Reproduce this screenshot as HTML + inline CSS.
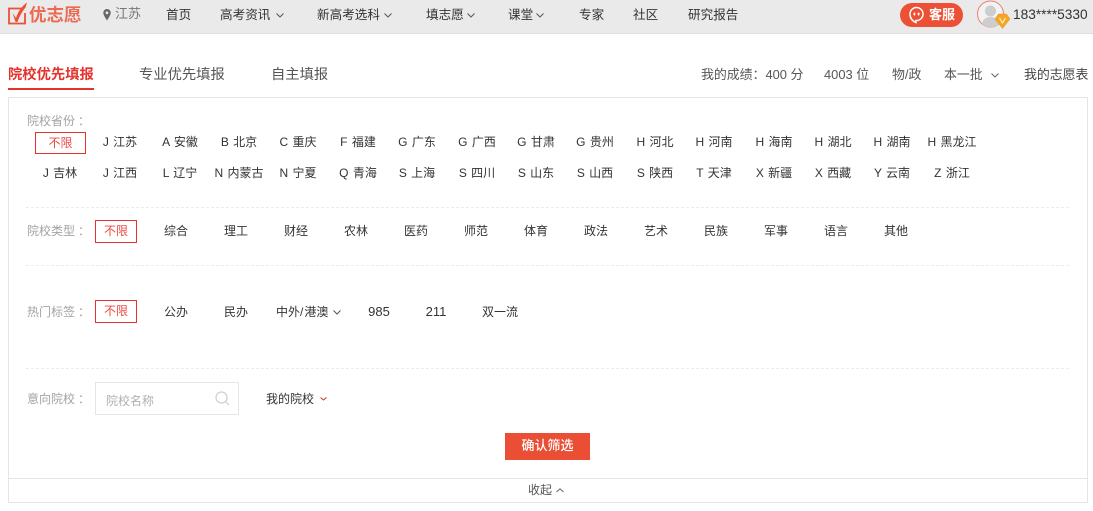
<!DOCTYPE html>
<html lang="zh">
<head>
<meta charset="utf-8">
<style>
html,body{margin:0;padding:0;width:1093px;height:511px;overflow:hidden;background:#fff}
body{position:relative;font-family:"Liberation Sans","Noto Sans CJK SC",sans-serif;font-size:12px;color:#333}
.a{position:absolute}
.c{position:absolute;width:70px;text-align:center;line-height:20px;height:20px;white-space:nowrap;word-spacing:1px}
.t{position:absolute;line-height:20px;height:20px;white-space:nowrap}
.g{color:#a3a3a3}
.n{color:#333;font-size:12.600px}
.r{color:#555;font-size:12.900px}
.k{position:relative;left:3px}
.box{position:absolute;border:1px solid #e5322d;box-sizing:border-box;color:#ea4a44;text-align:center}
.dash{position:absolute;left:26px;width:1043px;border-top:1px dashed #ececec;height:0}
svg{position:absolute;overflow:visible}
</style>
</head>
<body>
<div class="a" style="left:0;top:0;width:1093px;height:33px;background:#eaeaea;border-bottom:1px solid #dedede"></div>

<svg style="left:8px;top:2px" width="20" height="24" viewBox="0 0 20 24" fill="none">
<path d="M14 6.500H1V21.500H17V11" stroke="#ea5136" stroke-width="1.800"/>
<path d="M4.500 11L8 16C10 9.500 14 4 19 0.500L17.500 5.500C14.500 9 11.500 14 9.500 20H7.500Z" fill="#ea5136"/>
</svg>
<div class="t" style="left:29px;top:3px;font-size:17.500px;line-height:24px;height:24px;color:#ec6a52;font-weight:700">优志愿</div>

<svg style="left:103px;top:9px" width="8" height="12" viewBox="0 0 8 12"><path fill-rule="evenodd" d="M4 0a3.700 3.700 0 0 1 3.700 3.800C7.700 6.300 5 9.800 4 11.500 3 9.800.3 6.300.3 3.800A3.700 3.700 0 0 1 4 0Zm0 2.400a1.400 1.400 0 1 0 0 2.800 1.400 1.400 0 0 0 0-2.800Z" fill="#666"/></svg>
<div class="t" style="left:115px;top:4px;color:#777;font-size:13px">江苏</div>
<div class="t n" style="left:166px;top:5px">首页</div>
<div class="t n" style="left:220px;top:5px">高考资讯</div>
<svg style="left:276px;top:13px" width="8" height="5" fill="none"><path d="M.5.500 4 4 7.500.5" stroke="#555"/></svg>
<div class="t n" style="left:317px;top:5px">新高考选科</div>
<svg style="left:384px;top:13px" width="8" height="5" fill="none"><path d="M.5.500 4 4 7.500.5" stroke="#555"/></svg>
<div class="t n" style="left:426px;top:5px">填志愿</div>
<svg style="left:467px;top:13px" width="8" height="5" fill="none"><path d="M.5.500 4 4 7.500.5" stroke="#555"/></svg>
<div class="t n" style="left:508px;top:5px">课堂</div>
<svg style="left:536px;top:13px" width="8" height="5" fill="none"><path d="M.5.500 4 4 7.500.5" stroke="#555"/></svg>
<div class="t n" style="left:579px;top:5px">专家</div>
<div class="t n" style="left:633px;top:5px">社区</div>
<div class="t n" style="left:688px;top:5px">研究报告</div>

<div class="a" style="left:900px;top:3px;width:63px;height:24px;border-radius:12px;background:#ec5135"></div>
<svg style="left:908px;top:6px" width="17" height="18" viewBox="0 0 17 18" fill="none"><path d="M8.500 1.500a6.500 6.500 0 0 1 0 13H8v2C4.500 15 2 12 2 8A6.500 6.500 0 0 1 8.500 1.500Z" stroke="#fff" stroke-width="1.500"/><rect x="5.500" y="6.500" width="1.800" height="3" rx=".9" fill="#fff"/><rect x="9.700" y="6.500" width="1.800" height="3" rx=".9" fill="#fff"/></svg>
<div class="t" style="left:929px;top:5px;color:#fff;font-weight:700;font-size:13px">客服</div>

<svg style="left:977px;top:0" width="35" height="30" viewBox="0 0 35 30">
<circle cx="13.500" cy="14" r="13" fill="#f2f2f2" stroke="#e8806f"/>
<circle cx="13.500" cy="11" r="5.500" fill="#cdcdcd"/>
<path d="M5 24c1-5 4-7 8.500-7s7.500 2 8.500 7a13 13 0 0 1-17 0Z" fill="#cdcdcd"/>
<path d="M18 19l3.500-5h8l3.500 5-7.500 9.500Z" fill="#f6a623" stroke="#ee8a24" stroke-width=".5"/>
<path d="M22.500 18l3 5 3-5" fill="none" stroke="#fff3c4" stroke-width="1.200"/>
</svg>
<div class="t" style="left:1013px;top:5px;font-size:13.700px;color:#333">183****5330</div>

<div class="t" style="left:8px;top:65px;font-size:14.300px;font-weight:700;color:#e5322d;line-height:20px">院校优先填报</div>
<div class="a" style="left:8px;top:88px;width:86px;height:2px;background:#e5322d"></div>
<div class="t" style="left:139px;top:65px;font-size:14.300px;color:#555">专业优先填报</div>
<div class="t" style="left:271px;top:65px;font-size:14.300px;color:#555">自主填报</div>

<div class="t r" style="left:701px;top:65px">我的成绩：400 分</div>
<div class="t r" style="left:824px;top:65px">4003 位</div>
<div class="t r" style="left:892px;top:65px">物/政</div>
<div class="t r" style="left:944px;top:65px">本一批</div>
<svg style="left:991px;top:73px" width="8" height="5" fill="none"><path d="M.5.500 4 4 7.500.5" stroke="#666"/></svg>
<div class="t r" style="left:1024px;top:65px;color:#444">我的志愿表</div>

<div class="a" style="left:8px;top:97px;width:1080px;height:406px;box-sizing:border-box;border:1px solid #e5e5e5"></div>
<div class="a" style="left:9px;top:478px;width:1078px;height:1px;background:#e5e5e5"></div>

<div class="t g" style="left:27px;top:111px">院校省份<span class="k">：</span></div>
<div class="box" style="left:35px;top:132px;width:51px;height:22px;line-height:20px">不限</div>
<div class="c" style="left:85px;top:132px">J 江苏</div>
<div class="c" style="left:145px;top:132px">A 安徽</div>
<div class="c" style="left:204px;top:132px">B 北京</div>
<div class="c" style="left:263px;top:132px">C 重庆</div>
<div class="c" style="left:323px;top:132px">F 福建</div>
<div class="c" style="left:382px;top:132px">G 广东</div>
<div class="c" style="left:442px;top:132px">G 广西</div>
<div class="c" style="left:501px;top:132px">G 甘肃</div>
<div class="c" style="left:560px;top:132px">G 贵州</div>
<div class="c" style="left:620px;top:132px">H 河北</div>
<div class="c" style="left:679px;top:132px">H 河南</div>
<div class="c" style="left:739px;top:132px">H 海南</div>
<div class="c" style="left:798px;top:132px">H 湖北</div>
<div class="c" style="left:857px;top:132px">H 湖南</div>
<div class="c" style="left:917px;top:132px">H 黑龙江</div>

<div class="c" style="left:25px;top:163px">J 吉林</div>
<div class="c" style="left:85px;top:163px">J 江西</div>
<div class="c" style="left:145px;top:163px">L 辽宁</div>
<div class="c" style="left:204px;top:163px">N 内蒙古</div>
<div class="c" style="left:263px;top:163px">N 宁夏</div>
<div class="c" style="left:323px;top:163px">Q 青海</div>
<div class="c" style="left:382px;top:163px">S 上海</div>
<div class="c" style="left:442px;top:163px">S 四川</div>
<div class="c" style="left:501px;top:163px">S 山东</div>
<div class="c" style="left:560px;top:163px">S 山西</div>
<div class="c" style="left:620px;top:163px">S 陕西</div>
<div class="c" style="left:679px;top:163px">T 天津</div>
<div class="c" style="left:739px;top:163px">X 新疆</div>
<div class="c" style="left:798px;top:163px">X 西藏</div>
<div class="c" style="left:857px;top:163px">Y 云南</div>
<div class="c" style="left:917px;top:163px">Z 浙江</div>

<div class="dash" style="top:207px"></div>

<div class="t g" style="left:27px;top:221px">院校类型<span class="k">：</span></div>
<div class="box" style="left:95px;top:220px;width:42px;height:23px;line-height:21px">不限</div>
<div class="c" style="left:141px;top:221px">综合</div>
<div class="c" style="left:201px;top:221px">理工</div>
<div class="c" style="left:261px;top:221px">财经</div>
<div class="c" style="left:321px;top:221px">农林</div>
<div class="c" style="left:381px;top:221px">医药</div>
<div class="c" style="left:441px;top:221px">师范</div>
<div class="c" style="left:501px;top:221px">体育</div>
<div class="c" style="left:561px;top:221px">政法</div>
<div class="c" style="left:621px;top:221px">艺术</div>
<div class="c" style="left:681px;top:221px">民族</div>
<div class="c" style="left:741px;top:221px">军事</div>
<div class="c" style="left:801px;top:221px">语言</div>
<div class="c" style="left:861px;top:221px">其他</div>

<div class="dash" style="top:265px"></div>

<div class="t g" style="left:27px;top:302px">热门标签<span class="k">：</span></div>
<div class="box" style="left:95px;top:300px;width:42px;height:23px;line-height:21px">不限</div>
<div class="c" style="left:141px;top:302px">公办</div>
<div class="c" style="left:201px;top:302px">民办</div>
<div class="t" style="left:276px;top:302px">中外<span style="letter-spacing:1px">/</span>港澳</div>
<svg style="left:333px;top:310px" width="8" height="5" fill="none"><path d="M.5.500 4 4 7.500.5" stroke="#555"/></svg>
<div class="c" style="left:344px;top:302px;font-size:13px">985</div>
<div class="c" style="left:401px;top:302px;font-size:13px">211</div>
<div class="c" style="left:465px;top:302px">双一流</div>

<div class="dash" style="top:368px"></div>

<div class="t g" style="left:27px;top:389px">意向院校<span class="k">：</span></div>
<div class="a" style="left:95px;top:382px;width:144px;height:33px;box-sizing:border-box;border:1px solid #e5e5e5"></div>
<div class="t" style="left:106px;top:391px;color:#b0b0b0">院校名称</div>
<svg style="left:215px;top:391px" width="15" height="15" viewBox="0 0 15 15" fill="none"><circle cx="6.500" cy="6.500" r="5.500" stroke="#cfcfcf" stroke-width="1.200"/><path d="M10.500 10.500 14 14" stroke="#cfcfcf" stroke-width="1.200"/></svg>
<div class="t" style="left:266px;top:389px;color:#333">我的院校</div>
<svg style="left:320px;top:397px" width="7" height="4" fill="none"><path d="M.5.500 3.500 3 6.500.5" stroke="#c0392b"/></svg>

<div class="a" style="left:505px;top:433px;width:85px;height:27px;background:#ea4f35;color:#fff;text-align:center;line-height:26px;font-size:13px;font-weight:500">确认筛选</div>

<div class="t" style="left:528px;top:480px;color:#555">收起</div>
<svg style="left:556px;top:488px" width="8" height="5" fill="none"><path d="M.5 4 4 .8 7.500 4" stroke="#666"/></svg>
</body>
</html>
